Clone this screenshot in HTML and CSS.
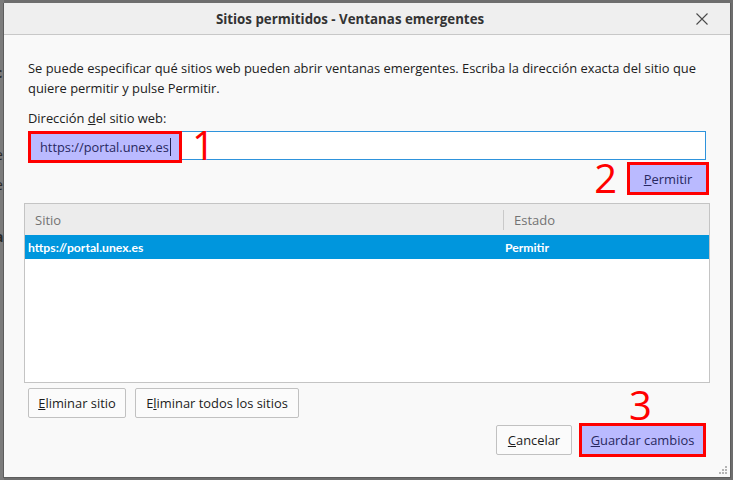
FILE: index.html
```html
<!DOCTYPE html>
<html lang="es">
<head>
<meta charset="utf-8">
<title>Sitios permitidos - Ventanas emergentes</title>
<link rel="stylesheet" href="styles.css">
</head>
<body>
<div class="backdrop">
  <span class="frag frag-b" style="top:64px">c</span>
  <span class="frag" style="top:146px">e</span>
  <span class="frag" style="top:176px">e</span>
  <span class="frag frag-b" style="top:228px">a</span>
  <span class="frag frag-r" style="top:259px">l</span>
  <span class="frag" style="top:369px">i</span>
</div>
<div class="dialog">
  <div class="titlebar">
    <span class="title">Sitios permitidos - Ventanas emergentes</span>
    <span class="close">
      <svg width="12" height="12" viewBox="0 0 12 12"><path d="M0.5 0.5 L11.5 11.5 M11.5 0.5 L0.5 11.5" stroke="#4a4a4a" stroke-width="1.1" fill="none"/></svg>
    </span>
  </div>
  <div class="content">
    <p class="desc">Se puede especificar qué sitios web pueden abrir ventanas emergentes. Escriba la dirección exacta del sitio que<br>quiere permitir y pulse Permitir.</p>
    <div class="label">Dirección <u>d</u>el sitio web:</div>
    <div class="input">
      <div class="sel"><span class="url">https://portal.unex.es</span><span class="caret"></span></div>
      <span class="num num1">1</span>
    </div>
    <div class="allowrow">
      <span class="num num2">2</span>
      <button class="btn hl btn-allow"><u>P</u>ermitir</button>
    </div>
    <div class="table">
      <div class="thead">
        <div class="th th-site">Sitio</div>
        <div class="th th-state">Estado</div>
      </div>
      <div class="tr selected">
        <div class="td td-site">https://portal.unex.es</div>
        <div class="td td-state">Permitir</div>
      </div>
    </div>
    <div class="rowbtns">
      <button class="btn btn-del"><u>E</u>liminar sitio</button>
      <button class="btn btn-delall">E<u>l</u>iminar todos los sitios</button>
    </div>
    <div class="footer">
      <button class="btn btn-cancel"><u>C</u>ancelar</button>
      <div class="savewrap">
        <span class="num num3">3</span>
        <button class="btn hl btn-save"><u>G</u>uardar cambios</button>
      </div>
    </div>
  </div>
  <svg class="grip" width="9" height="9" viewBox="0 0 9 9">
    <rect x="6" y="0" width="2" height="2" fill="#b5b5b5"/>
    <rect x="3" y="3" width="2" height="2" fill="#b5b5b5"/>
    <rect x="6" y="3" width="2" height="2" fill="#b5b5b5"/>
    <rect x="0" y="6" width="2" height="2" fill="#b5b5b5"/>
    <rect x="3" y="6" width="2" height="2" fill="#b5b5b5"/>
    <rect x="6" y="6" width="2" height="2" fill="#b5b5b5"/>
  </svg>
</div>
</body>
</html>
```
FILE: styles.css
```css
* { box-sizing: border-box; }
html, body { margin: 0; padding: 0; }
body {
  width: 733px;
  height: 480px;
  overflow: hidden;
  background: #6e6e6e;
  font-family: "Open Sans", "Noto Sans", sans-serif;
  font-size: 12.9px;
  color: #202020;
  position: relative;
}
.backdrop {
  position: absolute;
  left: 0; top: 0;
  width: 4px; height: 480px;
  background: #7c7c7c;
  overflow: hidden;
}
.frag {
  position: absolute;
  left: -5px;
  font-size: 14px;
  line-height: 18px;
  color: #2a2a2a;
}
.frag-b { font-weight: 700; }
.frag-r { color: #4a3020; }

.dialog {
  position: relative;
  margin: 3px 0 0 3px;
  width: 728px;
  height: 475px;
  background: #f9f9f9;
  border: 1px solid #5d5d5d;
  border-top: none;
  display: flex;
  flex-direction: column;
}
.titlebar {
  height: 32px;
  background: #efefef;
  border-bottom: 1px solid #c8c8c8;
  display: flex;
  align-items: center;
}
.title {
  flex: 1;
  text-align: center;
  font-weight: 700;
  font-size: 13.3px;
  color: #333;
  padding-top: 1px;
}
.close {
  width: 26px;
  display: flex;
  justify-content: flex-start;
  margin-right: 8px;
}
.content {
  padding: 0 20px;
  display: flex;
  flex-direction: column;
}
.desc {
  margin: 23px 0 0 4px;
  line-height: 20px;
}
.label {
  margin: 10px 0 0 4px;
  line-height: 20px;
}
.input {
  position: relative;
  margin: 3px 4px 0 4px;
  height: 29px;
  border: 1px solid #2e93dc;
  background: #fff;
}
.sel {
  position: absolute;
  left: -1px;
  top: -1px;
  width: 154px;
  height: 32px;
  border: 3px solid #ff0000;
  background: #babaff;
  display: flex;
  align-items: center;
  padding-left: 9px;
  color: #282860;
}
.url { font-size: 12.8px; }
.caret {
  width: 1px;
  height: 18px;
  background: #202050;
  margin-left: 1px;
}
.num {
  color: #ff0000;
  font-size: 40px;
  line-height: 40px;
  font-weight: 400;
}
.num1 {
  position: absolute;
  left: 163px;
  top: -7px;
}
.allowrow {
  margin-top: 2px;
  height: 33px;
  display: flex;
  justify-content: flex-end;
  align-items: center;
  gap: 10px;
  padding-right: 1px;
}
.num2 { margin-top: -2px; }
.btn {
  font-family: inherit;
  font-size: 12.9px;
  color: #1c1c1c;
  background: #fbfbfb;
  border: 1px solid #c1c1c1;
  border-radius: 2px;
  height: 30px;
  padding: 0 6px;
  margin: 0;
  text-align: center;
}
.btn.hl {
  background: #babaff;
  border: 3px solid #ff0000;
  border-radius: 0;
  color: #282860;
}
.btn-allow { width: 82px; height: 33px; }
.table {
  margin-top: 8px;
  height: 180px;
  border: 1px solid #c4c4c4;
  background: #fff;
}
.thead {
  height: 31px;
  background: #ececec;
  display: flex;
  align-items: center;
  color: #737373;
  font-size: 13px;
}
.th-site {
  width: 479px;
  padding-left: 10px;
  border-right: 1px solid #c9c9c9;
  height: 20px;
  line-height: 20px;
}
.th-state { padding-left: 10px; }
.tr {
  height: 24px;
  display: flex;
  align-items: center;
  font-family: "Lato", "Open Sans", sans-serif;
  font-weight: 700;
  font-size: 12.2px;
}
.selected { background: #0096dd; color: #fff; }
.td-site { width: 480px; padding-left: 3px; }
.td-state { padding-left: 0; }
.rowbtns {
  margin-top: 5px;
  padding-left: 4px;
  display: flex;
  gap: 9px;
}
.rowbtns .btn { height: 30px; }
.btn-del { width: 98px; }
.btn-delall { width: 164px; }
.footer {
  margin-top: 5px;
  display: flex;
  justify-content: flex-end;
  align-items: center;
  gap: 7px;
  padding-right: 4px;
}
.btn-cancel { width: 76px; }
.savewrap { position: relative; }
.btn-save { width: 127px; height: 34px; }
.num3 {
  position: absolute;
  left: 50px;
  top: -38px;
}
.grip {
  position: absolute;
  right: 2px;
  bottom: 2px;
}
```
